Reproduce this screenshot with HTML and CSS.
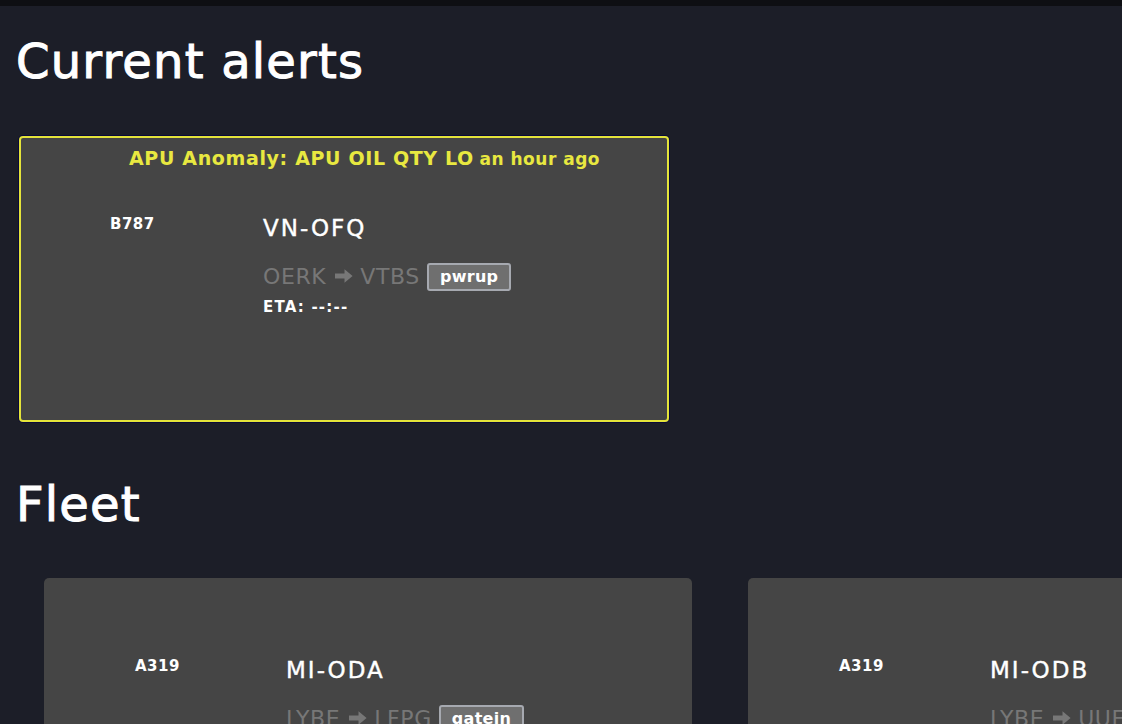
FILE: index.html
```html
<!DOCTYPE html>
<html lang="en">
<head>
<meta charset="utf-8">
<title>Fleet dashboard</title>
<link rel="stylesheet" href="styles.css">
</head>
<body>
<div class="topbar"></div>
<main class="page">
  <h1 class="section-title">Current alerts</h1>
  <section class="alerts">
    <article class="card card-alert">
      <div class="card-title"><span class="alert-name">APU Anomaly: APU OIL QTY LO</span> <span class="alert-time">an hour ago</span></div>
      <div class="card-body">
        <div class="ac-type">B787</div>
        <div class="ac-info">
          <div class="ac-reg">VN-OFQ</div>
          <div class="ac-route"><span>OERK</span><svg class="arrow" viewBox="0 0 18 16" aria-hidden="true"><path d="M0 5.5 H9.5 V1.2 L17.6 8 L9.5 14.8 V10.5 H0 Z"/></svg><span>VTBS</span><span class="badge">pwrup</span></div>
          <div class="ac-eta">ETA: --:--</div>
        </div>
      </div>
    </article>
  </section>
  <h1 class="section-title fleet-title">Fleet</h1>
  <section class="fleet">
    <article class="card">
      <div class="card-title"></div>
      <div class="card-body">
        <div class="ac-type">A319</div>
        <div class="ac-info">
          <div class="ac-reg">MI-ODA</div>
          <div class="ac-route"><span>LYBE</span><svg class="arrow" viewBox="0 0 18 16" aria-hidden="true"><path d="M0 5.5 H9.5 V1.2 L17.6 8 L9.5 14.8 V10.5 H0 Z"/></svg><span>LFPG</span><span class="badge">gatein</span></div>
          <div class="ac-eta">ETA: --:--</div>
        </div>
      </div>
    </article>
    <article class="card">
      <div class="card-title"></div>
      <div class="card-body">
        <div class="ac-type">A319</div>
        <div class="ac-info">
          <div class="ac-reg">MI-ODB</div>
          <div class="ac-route"><span>LYBE</span><svg class="arrow" viewBox="0 0 18 16" aria-hidden="true"><path d="M0 5.5 H9.5 V1.2 L17.6 8 L9.5 14.8 V10.5 H0 Z"/></svg><span>UUEE</span><span class="badge">gatein</span></div>
          <div class="ac-eta">ETA: --:--</div>
        </div>
      </div>
    </article>
  </section>
</main>
</body>
</html>
```
FILE: styles.css
```css
html, body {
  margin: 0;
  padding: 0;
}
body {
  background: #1c1e28;
  color: #ffffff;
  font-family: "DejaVu Sans", "Inter", sans-serif;
  overflow: hidden;
  width: 1122px;
  height: 724px;
}
.topbar {
  height: 6px;
  background: #0e0f13;
}
.page {
  padding: 0 0 0 16px;
}
.section-title {
  margin: 0;
  padding-top: 31px;
  font-size: 48px;
  line-height: 48px;
  font-weight: normal;
  letter-spacing: 1.2px;
  -webkit-text-stroke: 1px #ffffff;
  color: #ffffff;
}
.fleet-title {
  padding-top: 0;
}
.alerts {
  padding: 51px 0 0 3px;
  margin-bottom: 58px;
}
.card {
  background: #454545;
  border-radius: 5px;
  width: 648px;
  height: 286px;
  box-sizing: border-box;
  padding-top: 9px;
  flex: none;
}
.card-alert {
  width: 650px;
  border: 2px solid #e4e43a;
  border-radius: 4px;
  box-shadow: 0 0 0 1px #0a0a3a;
  padding-top: 7px;
}
.card-title {
  height: 26px;
  text-align: center;
  padding-left: 41px;
  color: #e8e840;
  font-weight: bold;
  white-space: nowrap;
  line-height: 26px;
}
.alert-name {
  font-size: 19px;
  letter-spacing: 0.65px;
}
.alert-time {
  font-size: 17px;
  letter-spacing: 0.5px;
}
.card-body {
  display: flex;
  padding: 44px 0 0 91px;
}
.card-alert .card-body {
  padding-left: 89px;
}
.ac-type {
  width: 151px;
  flex: none;
  font-size: 15px;
  font-weight: bold;
  letter-spacing: 0.5px;
  line-height: 18px;
}
.card-alert .ac-type {
  width: 153px;
}
.ac-info {
  display: flex;
  flex-direction: column;
}
.ac-reg {
  font-size: 23px;
  line-height: 26px;
  letter-spacing: 2px;
  -webkit-text-stroke: 0.4px #ffffff;
  margin-bottom: 21px;
}
.ac-route {
  display: flex;
  align-items: center;
  color: #777777;
  font-size: 22px;
  letter-spacing: 0.6px;
  line-height: 30px;
  white-space: nowrap;
}
.arrow {
  width: 18px;
  height: 16px;
  margin: 0 7px 3px 9px;
  fill: #777777;
}
.badge {
  margin-left: 7px;
  background: #6f6f6f;
  color: #ffffff;
  border: 2px solid #a6a9b0;
  border-radius: 3px;
  font-size: 16px;
  font-weight: bold;
  letter-spacing: 0.3px;
  line-height: 24px;
  padding: 0 11px;
}
.ac-eta {
  margin-top: 6px;
  font-size: 15px;
  font-weight: bold;
  letter-spacing: 1.2px;
  line-height: 18px;
}
.fleet {
  display: flex;
  gap: 56px;
  padding: 50px 0 0 28px;
}
```
